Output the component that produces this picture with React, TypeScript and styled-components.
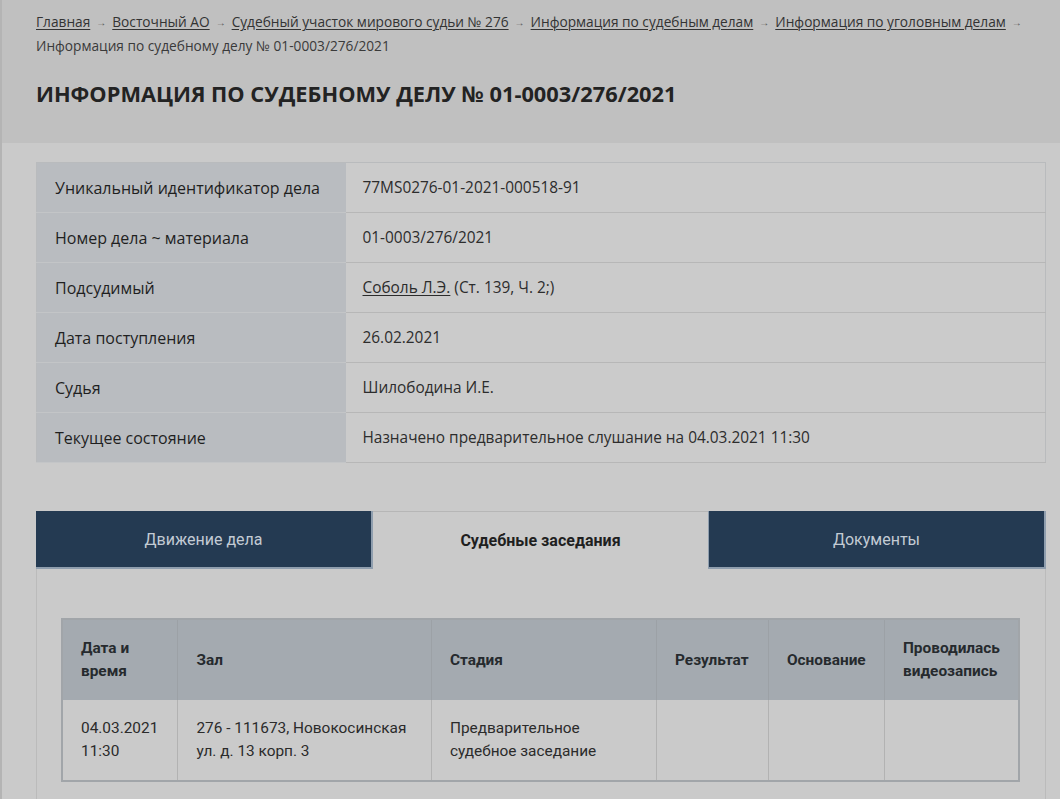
import React from "react";
import styled, { createGlobalStyle } from "styled-components";

const GlobalStyle = createGlobalStyle`
  html, body { margin: 0; padding: 0; }
  body {
    background: #cacaca;
    font-family: "Open Sans", "Liberation Sans", sans-serif;
    color: #2b2b2b;
  }
`;

const Page = styled.div`
  min-height: 799px;
  border-left: 2px solid #b4b4b4;
  box-sizing: border-box;
`;

const Header = styled.header`
  background: #c0c0c0;
  height: 143px;
  box-sizing: border-box;
  padding: 10px 0 0 34px;
`;

const Crumbs = styled.nav`
  font-size: 13.7px;
  line-height: 23px;
  color: #3a3a3a;
`;

const Trail = styled.div`
  white-space: nowrap;
`;

const CrumbLink = styled.a`
  color: #333;
  text-decoration: underline;
  text-underline-offset: 2px;
  text-decoration-thickness: 1px;
`;

const Arrow = styled.span`
  display: inline-block;
  font-size: 10px;
  color: #555;
  margin: 0 6px;
  vertical-align: 1px;
`;

const Title = styled.h1`
  margin: 22px 0 0;
  font-size: 21.8px;
  font-weight: 700;
  line-height: 30px;
  color: #232323;
  text-transform: uppercase;
`;

const Main = styled.main`
  padding: 19px 14px 0 34px;
`;

const InfoTable = styled.table`
  width: 1010px;
  border-collapse: collapse;
  border: 1px solid #b9bbbd;
`;

const Label = styled.th`
  width: 309px;
  height: 50px;
  box-sizing: border-box;
  padding: 0 18px;
  background: #b9bcc0;
  border-bottom: 1px solid #c3c5c7;
  text-align: left;
  font-size: 16px;
  font-weight: 400;
  color: #1f1f1f;
`;

const Value = styled.td`
  height: 50px;
  box-sizing: border-box;
  padding: 0 17px;
  background: #cbcbcb;
  border-bottom: 1px solid #b7b7b7;
  font-size: 15.4px;
  color: #2d2d2d;
`;

const PersonLink = styled.a`
  color: #2b2b2b;
  text-decoration: underline;
  text-underline-offset: 2px;
`;

const Tabs = styled.div`
  display: flex;
  margin-top: 48px;
  width: 1010px;
`;

const Tab = styled.div<{ $active?: boolean }>`
  flex: 1;
  height: 58px;
  display: flex;
  align-items: center;
  justify-content: center;
  box-sizing: border-box;
  font-family: Roboto, "Liberation Sans", sans-serif;
  font-size: 16px;
  ${(p) =>
    p.$active
      ? `
    background: #cacaca;
    border-top: 1px solid #b6b6b6;
    color: #1f1f1f;
    font-weight: 700;
  `
      : `
    background: #243a52;
    color: #c3cbd4;
    border: 1px solid #8f9eae;
    border-width: 0 2px 2px 0;
  `}
  &:last-child {
    border-left-width: 1px;
  }
`;

const Panel = styled.section`
  width: 1010px;
  box-sizing: border-box;
  border-left: 1px solid #bbbbbb;
  border-right: 1px solid #bbbbbb;
  padding: 49px 25px 20px 24px;
`;

const Sessions = styled.table`
  width: 959px;
  border-collapse: collapse;
  border: 2px solid #a1a5a9;
  font-family: Roboto, "Liberation Sans", sans-serif;
  font-size: 15.4px;
`;

const HeadCell = styled.th<{ $w: number }>`
  width: ${(p) => p.$w}px;
  height: 81px;
  box-sizing: border-box;
  padding: 0 18px;
  background: #a4aab0;
  border-left: 1px solid #9ca1a6;
  text-align: left;
  font-weight: 700;
  line-height: 23px;
  color: #262a2e;
`;

const Cell = styled.td`
  height: 81px;
  box-sizing: border-box;
  padding: 0 18px;
  background: #cacaca;
  border-left: 1px solid #b2b2b2;
  line-height: 23px;
  color: #2b2b2b;
  vertical-align: middle;
`;

const crumbs = [
  "Главная",
  "Восточный АО",
  "Судебный участок мирового судьи № 276",
  "Информация по судебным делам",
  "Информация по уголовным делам",
];

const info: [string, React.ReactNode][] = [
  ["Уникальный идентификатор дела", "77MS0276-01-2021-000518-91"],
  ["Номер дела ~ материала", "01-0003/276/2021"],
  [
    "Подсудимый",
    <>
      <PersonLink href="#">Соболь Л.Э.</PersonLink> (Ст. 139, Ч. 2;)
    </>,
  ],
  ["Дата поступления", "26.02.2021"],
  ["Судья", "Шилободина И.Е."],
  ["Текущее состояние", "Назначено предварительное слушание на 04.03.2021 11:30"],
];

const columns: [React.ReactNode, number][] = [
  [<>Дата и<br />время</>, 116],
  ["Зал", 255],
  ["Стадия", 226],
  ["Результат", 112],
  ["Основание", 116],
  [<>Проводилась<br />видеозапись</>, 134],
];

export default function App() {
  return (
    <>
      <GlobalStyle />
      <Page>
        <Header>
          <Crumbs>
            <Trail>
              {crumbs.map((c) => (
                <React.Fragment key={c}>
                  <CrumbLink href="#">{c}</CrumbLink>
                  <Arrow>→</Arrow>
                </React.Fragment>
              ))}
            </Trail>
            <div>Информация по судебному делу № 01-0003/276/2021</div>
          </Crumbs>
          <Title>Информация по судебному делу № 01-0003/276/2021</Title>
        </Header>
        <Main>
          <InfoTable>
            <tbody>
              {info.map(([k, v]) => (
                <tr key={k}>
                  <Label>{k}</Label>
                  <Value>{v}</Value>
                </tr>
              ))}
            </tbody>
          </InfoTable>
          <Tabs>
            <Tab>Движение дела</Tab>
            <Tab $active>Судебные заседания</Tab>
            <Tab>Документы</Tab>
          </Tabs>
          <Panel>
            <Sessions>
              <thead>
                <tr>
                  {columns.map(([c, w], i) => (
                    <HeadCell key={i} $w={w}>
                      {c}
                    </HeadCell>
                  ))}
                </tr>
              </thead>
              <tbody>
                <tr>
                  <Cell>
                    04.03.2021
                    <br />
                    11:30
                  </Cell>
                  <Cell>276 - 111673, Новокосинская ул. д. 13 корп. 3</Cell>
                  <Cell>Предварительное судебное заседание</Cell>
                  <Cell />
                  <Cell />
                  <Cell />
                </tr>
              </tbody>
            </Sessions>
          </Panel>
        </Main>
      </Page>
    </>
  );
}
